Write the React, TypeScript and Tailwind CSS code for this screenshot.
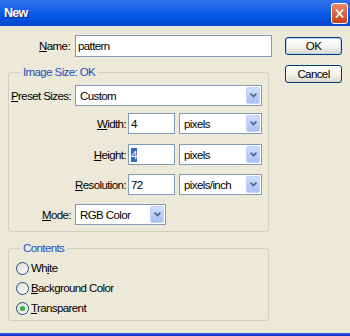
import type { ReactNode } from "react";

const Ul = ({ children }: { children: ReactNode }) => (
  <span className="underline underline-offset-[1px]">{children}</span>
);

const Combo = ({ value, className }: { value: string; className: string }) => (
  <div
    className={`flex items-center h-[21px] border border-[#7F9DB9] bg-white ${className}`}
  >
    <span className="flex-1 pl-[4px] truncate">{value}</span>
    <span className="w-[14px] h-[17px] mr-[1px] flex items-center justify-center rounded-[2px] border border-[#C3D3FD] bg-linear-to-b from-[#D0DDFD] to-[#A8C0F5]">
      <svg width="7" height="5" viewBox="0 0 7 5">
        <path d="M0.6 0.6 L3.5 3.6 L6.4 0.6" stroke="#4D6185" strokeWidth="1.6" fill="none" />
      </svg>
    </span>
  </div>
);

const TextBox = ({ children, className }: { children: ReactNode; className: string }) => (
  <div className={`flex items-center h-[21px] border border-[#7F9DB9] bg-white pl-[2px] ${className}`}>
    {children}
  </div>
);

const Radio = ({ checked, children }: { checked?: boolean; children: ReactNode }) => (
  <div className="flex items-center h-[20px] pl-[7px] gap-[2px]">
    <span className="w-[13px] h-[13px] rounded-full border border-[#1C5180] bg-linear-to-br from-[#DCDCD7] to-white flex items-center justify-center">
      {checked && <span className="w-[5px] h-[5px] rounded-full bg-[#3FB33F] shadow-[0_0_1px_#7cd77c]" />}
    </span>
    <span>{children}</span>
  </div>
);

const Row = ({ label, labelW, pr, children }: { label: ReactNode; labelW: string; pr: string; children: ReactNode }) => (
  <div className="flex items-center">
    <span className={`${labelW} ${pr} text-right whitespace-nowrap`}>{label}</span>
    {children}
  </div>
);

export default function App() {
  return (
    <div className="w-[350px] h-[336px] bg-[#ECE9D8] flex flex-col text-[11.5px] tracking-[-0.6px] leading-[14px] text-black font-['Liberation_Sans',Arial,sans-serif]">
      <div className="h-[26px] flex items-center justify-between pl-[4px] pr-[2px] bg-linear-to-b from-[#2E73EC] via-[#0456E6] via-60% to-[#0346CB]">
        <span className="text-white font-bold text-[12.5px] tracking-[-0.8px] [text-shadow:1px_1px_#10237a]">New</span>
        <span className="w-[17px] h-[21px] rounded-[3px] border border-white bg-linear-to-b from-[#E9886B] to-[#C53E17] flex items-center justify-center">
          <svg width="9" height="11" viewBox="0 0 9 11">
            <path d="M1 1.5 L8 9.5 M8 1.5 L1 9.5" stroke="white" strokeWidth="1.8" />
          </svg>
        </span>
      </div>

      <div className="flex-1 flex pl-[8px]">
        <div className="w-[264px] flex flex-col">
          <div className="mt-[9px]">
            <Row label={<><Ul>N</Ul>ame:</>} labelW="w-[67px]" pr="pr-[5px]">
              <TextBox className="w-[197px] h-[22px]">pattern</TextBox>
            </Row>
          </div>

          <fieldset className="mt-[8px] w-[261px] border border-[#D0D0BF] rounded-[3px] pb-[6px]">
            <legend className="ml-[11px] px-[3px] text-[#1F4FC0]">Image Size: OK</legend>
            <div className="pt-[6px] flex flex-col">
              <Row label={<><Ul>P</Ul>reset Sizes:</>} labelW="w-[66px]" pr="pr-[4px]">
                <Combo value="Custom" className="w-[187px]" />
              </Row>
              <div className="mt-[7px]">
                <Row label={<><Ul>W</Ul>idth:</>} labelW="w-[119px]" pr="pr-[2px]">
                  <TextBox className="w-[47px]">4</TextBox>
                  <Combo value="pixels" className="w-[83px] ml-[4px]" />
                </Row>
              </div>
              <div className="mt-[10px]">
                <Row label={<><Ul>H</Ul>eight:</>} labelW="w-[119px]" pr="pr-[2px]">
                  <TextBox className="w-[47px]">
                    <span className="bg-[#316AC5] text-white">4</span>
                  </TextBox>
                  <Combo value="pixels" className="w-[83px] ml-[4px]" />
                </Row>
              </div>
              <div className="mt-[9px]">
                <Row label={<><Ul>R</Ul>esolution:</>} labelW="w-[119px]" pr="pr-[2px]">
                  <TextBox className="w-[47px]">72</TextBox>
                  <Combo value="pixels/inch" className="w-[83px] ml-[4px]" />
                </Row>
              </div>
              <div className="mt-[9px]">
                <Row label={<><Ul>M</Ul>ode:</>} labelW="w-[66px]" pr="pr-[4px]">
                  <Combo value="RGB Color" className="w-[91px]" />
                </Row>
              </div>
            </div>
          </fieldset>

          <fieldset className="mt-[9px] w-[261px] border border-[#D0D0BF] rounded-[3px] pb-[2px]">
            <legend className="ml-[11px] px-[3px] text-[#1F4FC0]">Contents</legend>
            <div className="pt-[3px] flex flex-col">
              <Radio>Wh<Ul>i</Ul>te</Radio>
              <Radio><Ul>B</Ul>ackground Color</Radio>
              <Radio checked><Ul>T</Ul>ransparent</Radio>
            </div>
          </fieldset>
        </div>

        <div className="ml-[13px] flex flex-col">
          <button className="mt-[11px] w-[57px] h-[18px] rounded-[3px] border border-[#003C74] bg-linear-to-b from-white via-[#F3F3EF] to-[#DCD7CB] shadow-[inset_0_0_0_1px_#BCD3F7] flex items-center justify-center">
            OK
          </button>
          <button className="mt-[10px] w-[57px] h-[18px] rounded-[3px] border border-[#003C74] bg-linear-to-b from-white via-[#F3F3EF] to-[#DCD7CB] flex items-center justify-center">
            Cancel
          </button>
        </div>
      </div>

      <div className="h-[3px] bg-linear-to-b from-[#3A5FE0] to-[#0B2CC4]" />
    </div>
  );
}
